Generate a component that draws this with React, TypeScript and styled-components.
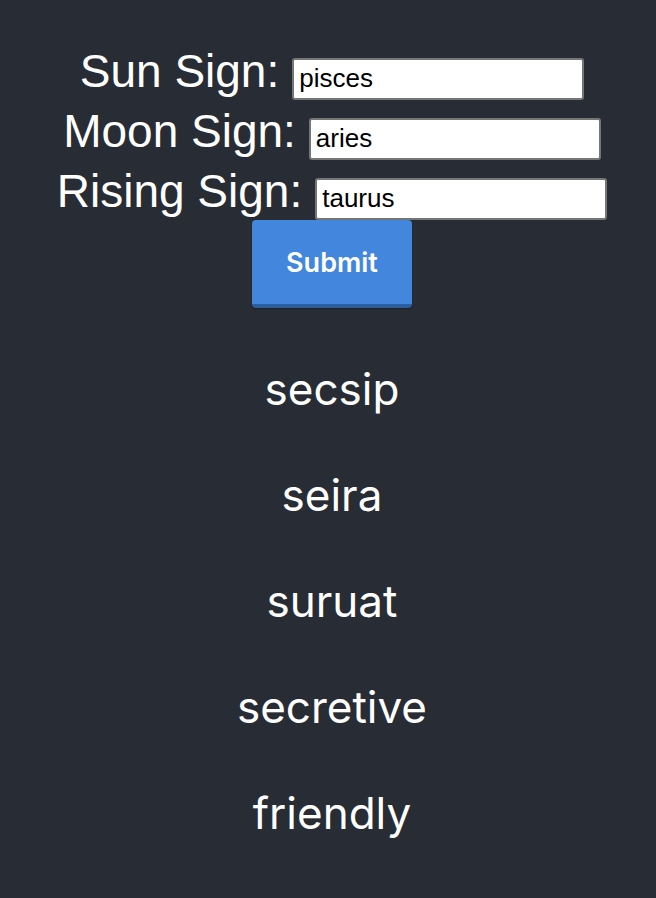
import React from "react";
import styled, { createGlobalStyle } from "styled-components";

const GlobalStyle = createGlobalStyle`
  html, body {
    margin: 0;
    padding: 0;
    background: #282c34;
  }
  body {
    font-family: "Liberation Sans", Arial, sans-serif;
    color: #ffffff;
  }
`;

const Page = styled.div`
  min-height: 100vh;
  box-sizing: border-box;
  background: #282c34;
  display: flex;
  flex-direction: column;
  align-items: center;
  padding: 45px 0 0 8px;
`;

const Form = styled.form`
  display: flex;
  flex-direction: column;
  align-items: center;
  gap: 5.5px;
  margin: 0;
`;

const Row = styled.label`
  display: flex;
  align-items: baseline;
  gap: 13px;
`;

const LabelText = styled.span`
  font-family: "Liberation Sans", Arial, sans-serif;
  font-size: 46px;
  line-height: 53px;
  color: #ffffff;
`;

const TextInput = styled.input`
  box-sizing: border-box;
  width: 292px;
  height: 42px;
  border: 2px solid #767676;
  border-radius: 3px;
  background: #ffffff;
  padding: 0 5px;
  font-family: "Liberation Sans", Arial, sans-serif;
  font-size: 26px;
  color: #000000;
  outline: none;
`;

const SubmitButton = styled.button`
  box-sizing: border-box;
  width: 160px;
  height: 88px;
  margin-top: -5px;
  border: none;
  border-bottom: 4px solid #2d5d9c;
  border-radius: 4px;
  background: #4287dd;
  color: #ffffff;
  font-family: Inter, "Liberation Sans", sans-serif;
  font-weight: 600;
  font-size: 27px;
  cursor: pointer;
  box-shadow: 0 1px 2px rgba(0, 0, 0, 0.35);
`;

const Results = styled.div`
  display: flex;
  flex-direction: column;
  align-items: center;
  gap: 50px;
  margin-top: 53px;
`;

const Result = styled.p`
  margin: 0;
  font-family: Inter, "Liberation Sans", sans-serif;
  font-size: 44px;
  line-height: 56px;
  color: #ffffff;
`;

const words = ["secsip", "seira", "suruat", "secretive", "friendly"];

export default function App() {
  return (
    <>
      <GlobalStyle />
      <Page>
        <Form onSubmit={(e) => e.preventDefault()}>
          <Row>
            <LabelText>Sun Sign:</LabelText>
            <TextInput type="text" defaultValue="pisces" />
          </Row>
          <Row>
            <LabelText>Moon Sign:</LabelText>
            <TextInput type="text" defaultValue="aries" />
          </Row>
          <Row>
            <LabelText>Rising Sign:</LabelText>
            <TextInput type="text" defaultValue="taurus" />
          </Row>
          <SubmitButton type="submit">Submit</SubmitButton>
        </Form>
        <Results>
          {words.map((w) => (
            <Result key={w}>{w}</Result>
          ))}
        </Results>
      </Page>
    </>
  );
}
